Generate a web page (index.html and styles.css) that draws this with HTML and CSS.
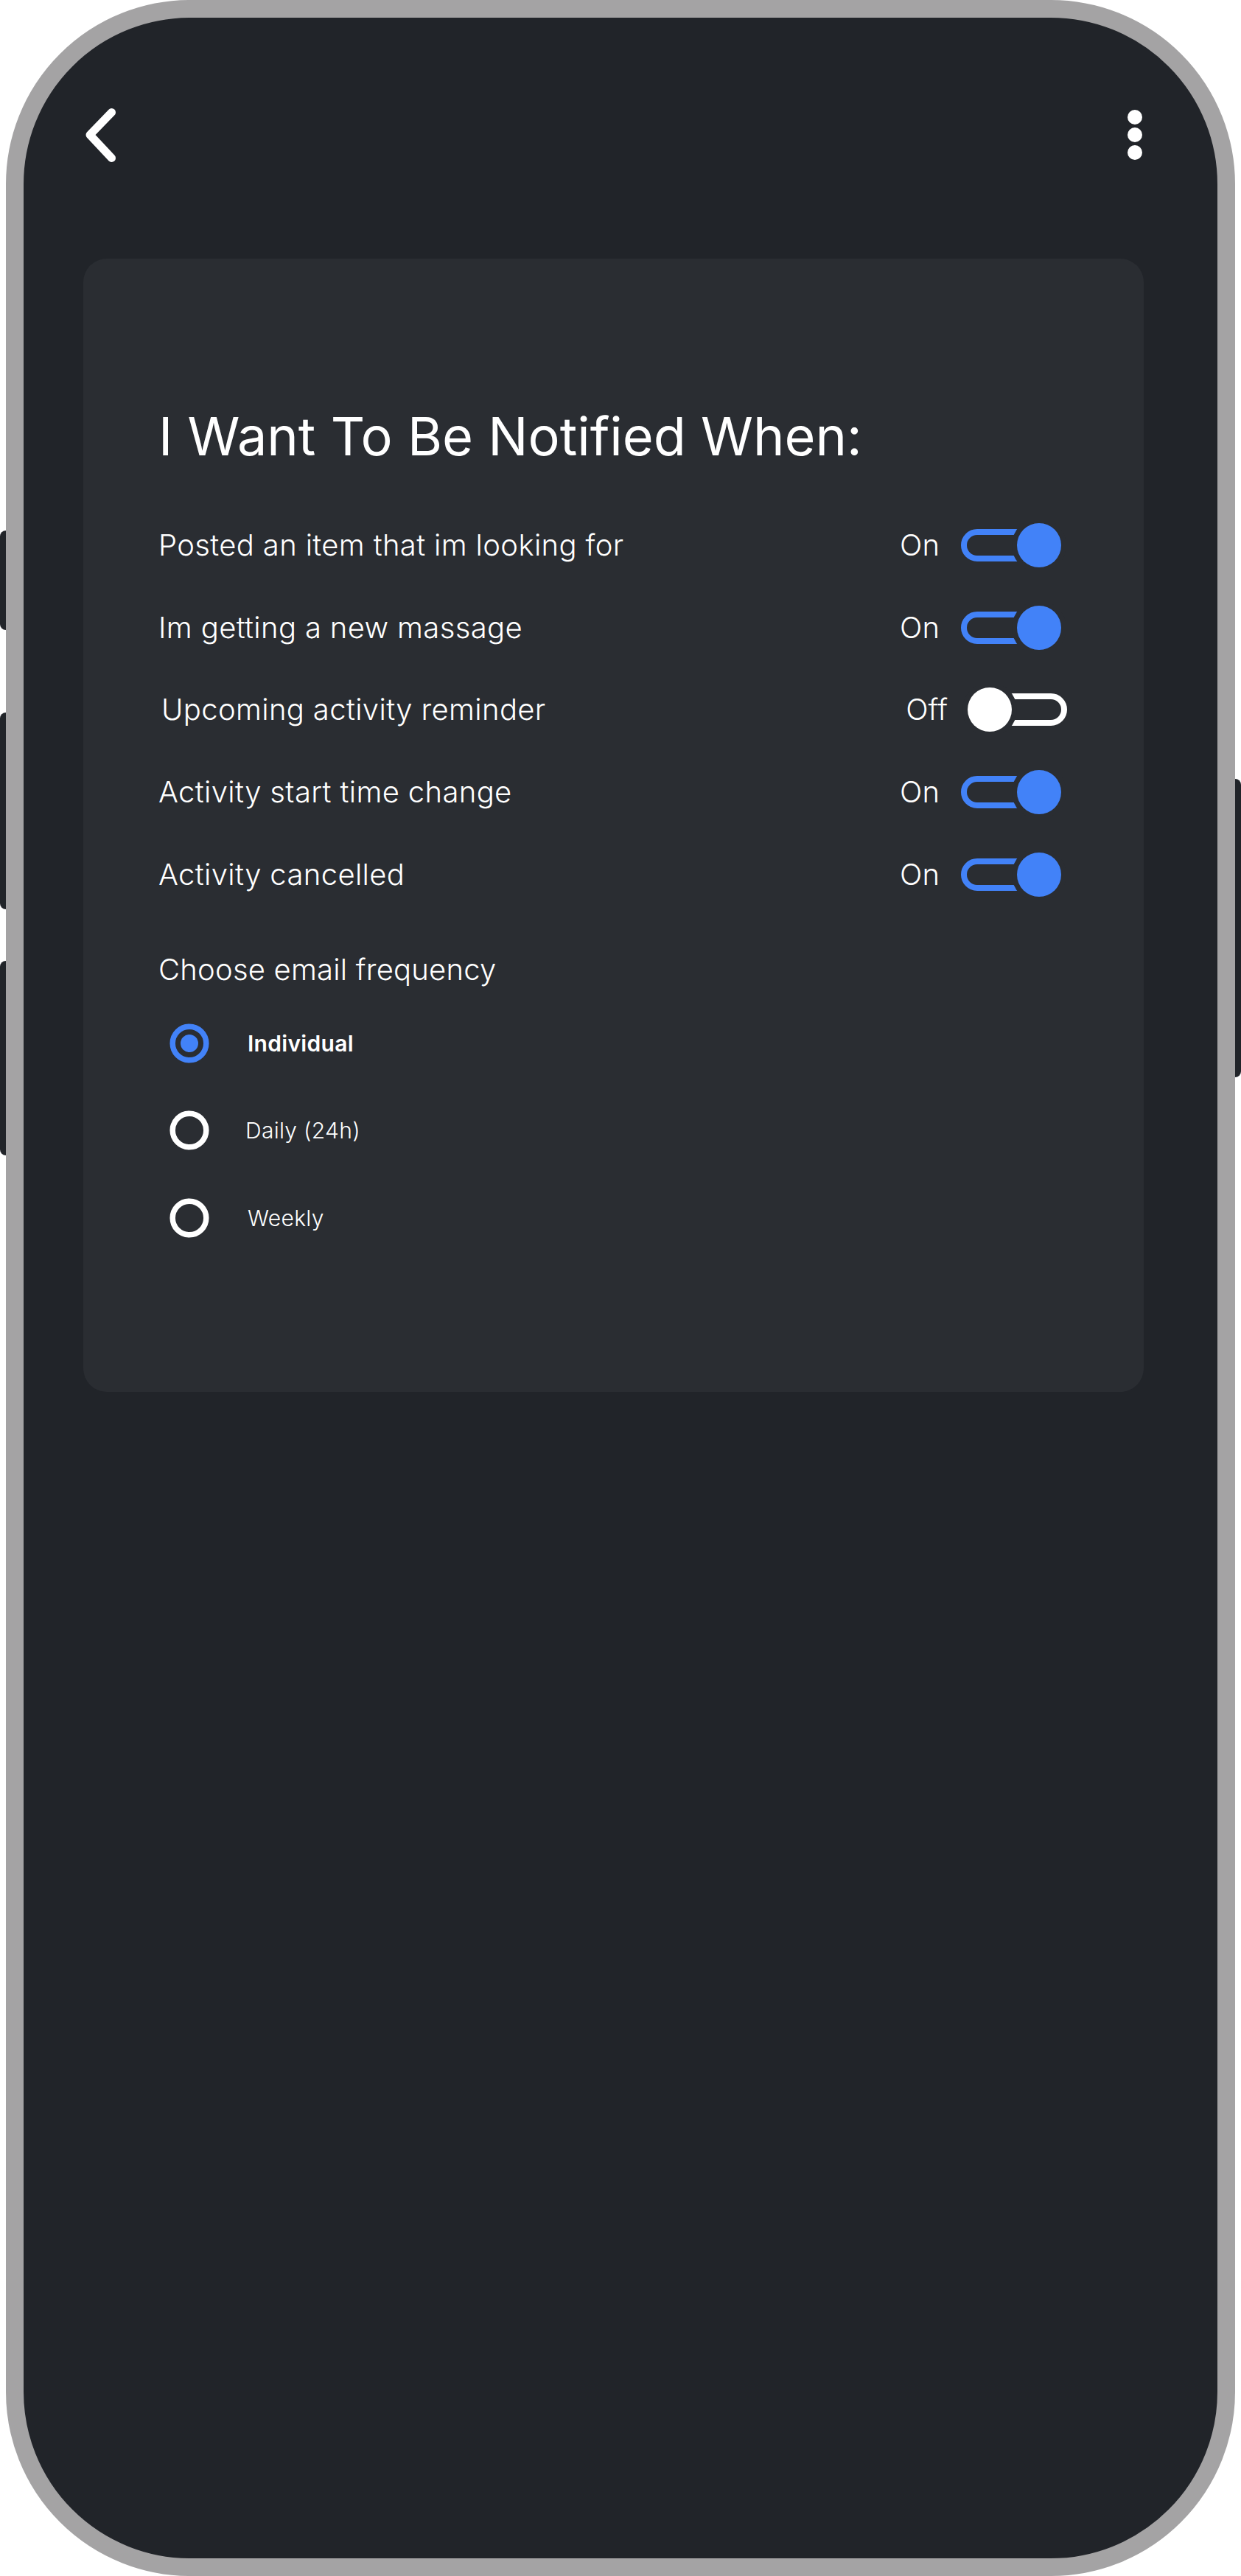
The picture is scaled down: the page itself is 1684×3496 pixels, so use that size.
FILE: index.html
```html
<!DOCTYPE html>
<html lang="en">
<head>
<meta charset="utf-8">
<title>Notifications</title>
<link rel="stylesheet" href="styles.css">
</head>
<body>
<div class="device">
  <span class="side-btn left b1"></span>
  <span class="side-btn left b2"></span>
  <span class="side-btn left b3"></span>
  <span class="side-btn right b4"></span>
  <div class="phone">
    <header class="topbar">
      <svg class="back" width="50" height="80" viewBox="0 0 50 80" aria-label="Back">
        <polyline points="41.5,9.5 12,40 41.5,71.5" fill="none" stroke="#fff" stroke-width="11" stroke-linecap="round" stroke-linejoin="round"/>
      </svg>
      <svg class="more" width="20" height="68" viewBox="0 0 20 68" aria-label="More">
        <circle cx="10" cy="10" r="10" fill="#fff"/>
        <circle cx="10" cy="34" r="10" fill="#fff"/>
        <circle cx="10" cy="58" r="10" fill="#fff"/>
      </svg>
    </header>

    <section class="card">
      <h1 class="title">I Want To Be Notified When:</h1>
      <ul class="toggles">
        <li class="row">
          <span class="row-label">Posted an item that im looking for</span>
          <span class="state">On</span>
          <svg class="switch" width="148" height="64" viewBox="0 0 148 64"><rect x="6" y="14" width="102" height="36" rx="18" fill="none" stroke="#4282f8" stroke-width="8"/><circle cx="108" cy="32" r="37" fill="#2a2d32"/><circle cx="108" cy="32" r="30" fill="#4282f8"/></svg>
        </li>
        <li class="row">
          <span class="row-label">Im getting a new massage</span>
          <span class="state">On</span>
          <svg class="switch" width="148" height="64" viewBox="0 0 148 64"><rect x="6" y="14" width="102" height="36" rx="18" fill="none" stroke="#4282f8" stroke-width="8"/><circle cx="108" cy="32" r="37" fill="#2a2d32"/><circle cx="108" cy="32" r="30" fill="#4282f8"/></svg>
        </li>
        <li class="row off">
          <span class="row-label">Upcoming activity reminder</span>
          <span class="state">Off</span>
          <svg class="switch" width="148" height="64" viewBox="0 0 148 64"><rect x="41" y="14" width="101" height="36" rx="18" fill="none" stroke="#fff" stroke-width="8"/><circle cx="41" cy="32" r="37" fill="#2a2d32"/><circle cx="41" cy="32" r="30" fill="#fff"/></svg>
        </li>
        <li class="row">
          <span class="row-label">Activity start time change</span>
          <span class="state">On</span>
          <svg class="switch" width="148" height="64" viewBox="0 0 148 64"><rect x="6" y="14" width="102" height="36" rx="18" fill="none" stroke="#4282f8" stroke-width="8"/><circle cx="108" cy="32" r="37" fill="#2a2d32"/><circle cx="108" cy="32" r="30" fill="#4282f8"/></svg>
        </li>
        <li class="row">
          <span class="row-label">Activity cancelled</span>
          <span class="state">On</span>
          <svg class="switch" width="148" height="64" viewBox="0 0 148 64"><rect x="6" y="14" width="102" height="36" rx="18" fill="none" stroke="#4282f8" stroke-width="8"/><circle cx="108" cy="32" r="37" fill="#2a2d32"/><circle cx="108" cy="32" r="30" fill="#4282f8"/></svg>
        </li>
      </ul>

      <p class="freq-title">Choose email frequency</p>
      <ul class="radios">
        <li class="radio selected">
          <svg class="radio-mark" width="54" height="54" viewBox="0 0 54 54"><circle cx="27" cy="27" r="22.8" fill="none" stroke="#4282f8" stroke-width="7.5"/><circle cx="27" cy="27" r="12" fill="#4282f8"/></svg>
          <span class="radio-label">Individual</span>
        </li>
        <li class="radio">
          <svg class="radio-mark" width="54" height="54" viewBox="0 0 54 54"><circle cx="27" cy="27" r="22.8" fill="none" stroke="#fff" stroke-width="7.5"/></svg>
          <span class="radio-label daily">Daily (24h)</span>
        </li>
        <li class="radio">
          <svg class="radio-mark" width="54" height="54" viewBox="0 0 54 54"><circle cx="27" cy="27" r="22.8" fill="none" stroke="#fff" stroke-width="7.5"/></svg>
          <span class="radio-label">Weekly</span>
        </li>
      </ul>
    </section>
  </div>
</div>
</body>
</html>
```

FILE: styles.css
```css
* { box-sizing: border-box; }

html, body {
  margin: 0;
  padding: 0;
  background: #ffffff;
}

body {
  font-family: Inter, "Noto Sans", "Liberation Sans", sans-serif;
  color: #ffffff;
}

.device {
  position: relative;
  width: 1684px;
  height: 3496px;
}

.side-btn {
  position: absolute;
  width: 8px;
  background: #212429;
}
.side-btn.left { left: 0; border-radius: 8px 0 0 8px; }
.side-btn.right { right: 0; border-radius: 0 8px 8px 0; }
.b1 { top: 720px; height: 135px; }
.b2 { top: 967px; height: 267px; }
.b3 { top: 1304px; height: 264px; }
.b4 { top: 1057px; height: 405px; }

.phone {
  margin-left: 8px;
  width: 1668px;
  height: 3496px;
  border: 24px solid #a4a3a4;
  border-radius: 250px;
  background: #212429;
  overflow: hidden;
}

.topbar {
  display: flex;
  justify-content: space-between;
  align-items: center;
  height: 80px;
  margin: 119px 102px 128px 78px;
}

.topbar svg { display: block; }

.card {
  margin: 0 100px 0 81px;
  background: #2a2d32;
  border-radius: 32px;
  padding: 197px 102px 177px 102px;
}

.title {
  margin: 0 0 48px 0;
  font-size: 72px;
  line-height: 88px;
  font-weight: 400;
  letter-spacing: 0;
}

.toggles, .radios {
  list-style: none;
  margin: 0;
  padding: 0;
}

.row {
  display: flex;
  align-items: center;
  height: 111.7px;
}

.row-label {
  flex: 1;
  font-size: 40px;
  font-weight: 300;
  line-height: 48px;
  letter-spacing: 0.35px;
}

.state {
  font-size: 40px;
  font-weight: 300;
  line-height: 48px;
  margin-right: 27px;
}

.row.off .row-label { padding-left: 4px; }
.row.off .state { margin-right: 16px; }

.switch { display: block; }

.freq-title {
  margin: 50px 0 16px 0;
  font-size: 40px;
  font-weight: 300;
  line-height: 48px;
  letter-spacing: 0.2px;
}

.radio {
  display: flex;
  align-items: center;
  height: 118.5px;
}

.radio-mark {
  display: block;
  margin-left: 15px;
  margin-right: 52px;
}

.radio-label {
  font-size: 30px;
  font-weight: 300;
  line-height: 40px;
  letter-spacing: 0.3px;
}

.radio.selected .radio-label { font-weight: 600; }
.radio-label.daily { margin-left: -3px; }
```
